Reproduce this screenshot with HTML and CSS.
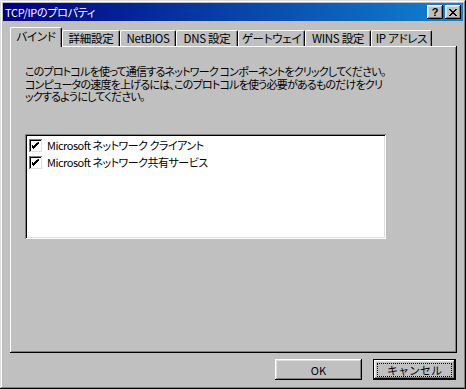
FILE: index.html
```html
<!DOCTYPE html>
<html lang="ja">
<head>
  <meta charset="UTF-8" />
  <title>TCP/IPのプロパティ</title>
  <link rel="stylesheet" href="styles.css">
</head>
<body>

  <div class="window">
    <div class="titlebar">
      <span class="title">TCP/IPのプロパティ</span>
      <div class="title-buttons">
        <div class="tbtn help">?</div>
        <div class="tbtn close">
          <svg width="8" height="7" viewBox="0 0 8 7"><path d="M0 0h2v1h1v1h2v-1h1v-1h2v1h-1v1h-1v1h-1v1h1v1h1v1h1v1h-2v-1h-1v-1h-2v1h-1v1h-2v-1h1v-1h1v-1h1v-1h-1v-1h-1v-1h-1z" fill="#000"/></svg>
        </div>
      </div>
    </div>

    <div class="content">
      <div class="tabs">
        <div class="tab active" style="width:52px">バインド</div>
        <div class="tab" style="width:58px">詳細設定</div>
        <div class="tab" style="width:56px">NetBIOS</div>
        <div class="tab" style="width:62px">DNS 設定</div>
        <div class="tab" style="width:67px">ゲートウェイ</div>
        <div class="tab" style="width:66px">WINS 設定</div>
        <div class="tab" style="width:61px">IP アドレス</div>
      </div>

      <div class="panel">
        <div class="desc">
          <div class="line">このプロトコルを使って通信するネットワーク コンポーネントをクリックしてください。</div>
          <div class="line">コンピュータの速度を上げるには、このプロトコルを使う必要があるものだけをクリ</div>
          <div class="line">ックするようにしてください。</div>
        </div>

        <div class="listbox">
          <div class="item"><span class="check"><svg width="7" height="7" viewBox="0 0 7 7"><path d="M6 0h1v2h-1v1h-1v1h-1v1h-1v1h-1v1h-1v-1h-1v-1h-1v-3h1v1h1v1h1v-1h1v-1h1v-1h1z" fill="#000"/></svg></span>Microsoft ネットワーク クライアント</div>
          <div class="item"><span class="check"><svg width="7" height="7" viewBox="0 0 7 7"><path d="M6 0h1v2h-1v1h-1v1h-1v1h-1v1h-1v1h-1v-1h-1v-1h-1v-3h1v1h1v1h1v-1h1v-1h1v-1h1z" fill="#000"/></svg></span>Microsoft ネットワーク共有サービス</div>
        </div>
      </div>

      <div class="actions">
        <div class="btn ok">OK</div>
        <div class="btn default"><span class="focus">キャンセル</span></div>
      </div>
    </div>
  </div>

</body>
</html>
```

FILE: styles.css
```css
body {
  margin: 0;
  background: #c0c0c0;
  font-family: "Noto Sans CJK JP", "Liberation Sans", sans-serif;
  font-size: 11px;
  color: #000;
}
.window {
  width: 466px;
  height: 389px;
  box-sizing: border-box;
  padding: 3px;
  background: #c0c0c0;
  box-shadow: inset -1px -1px #000, inset 1px 1px #dfdfdf, inset -2px -2px #808080, inset 2px 2px #fff;
}
.titlebar {
  height: 18px;
  display: flex;
  align-items: center;
  justify-content: space-between;
  padding: 0 2px 0 2px;
  background: linear-gradient(to right, #000080, #1084d0);
  color: #fff;
}
.title {
  font-size: 11px;
  line-height: 18px;
  letter-spacing: -0.3px;
  font-feature-settings: "palt";
}
.title-buttons {
  display: flex;
  gap: 2px;
}
.tbtn {
  width: 16px;
  height: 14px;
  box-sizing: border-box;
  background: #c0c0c0;
  color: #000;
  display: flex;
  align-items: center;
  justify-content: center;
  box-shadow: inset -1px -1px #000, inset 1px 1px #fff, inset -2px -2px #808080, inset 2px 2px #dfdfdf;
}
.help {
  font-family: "Liberation Sans", sans-serif;
  font-weight: bold;
  font-size: 11px;
  line-height: 14px;
}
.content {
  padding: 6px 6px 0 7px;
}
.tabs {
  display: flex;
  align-items: flex-end;
  height: 19px;
  position: relative;
  z-index: 1;
}
.tab {
  height: 16px;
  box-sizing: border-box;
  border-top: 1px solid #fff;
  border-left: 1px solid #fff;
  border-right: 1px solid #000;
  border-radius: 2px 2px 0 0;
  box-shadow: inset -1px 0 #808080;
  text-align: center;
  line-height: 15px;
  font-size: 11.5px;
  letter-spacing: -0.3px;
  font-feature-settings: "palt";
  white-space: nowrap;
}
.tab.active {
  height: 20px;
  margin-bottom: -1px;
  background: #c0c0c0;
  line-height: 17px;
}
.panel {
  height: 307px;
  box-sizing: border-box;
  padding: 19px 15px 0 15px;
  box-shadow: inset -1px -1px #000, inset 1px 1px #fff, inset -2px -2px #808080;
}
.desc {
  font-feature-settings: "palt";
  letter-spacing: -0.8px;
  white-space: nowrap;
}
.line {
  height: 12.5px;
  line-height: 12.5px;
}
.listbox {
  margin-top: 31px;
  width: 361px;
  height: 105px;
  box-sizing: border-box;
  padding: 3px 2px;
  background: #fff;
  box-shadow: inset 1px 1px #808080, inset -1px -1px #fff, inset 2px 2px #000, inset -2px -2px #dfdfdf;
}
.item {
  height: 17px;
  display: flex;
  align-items: center;
  letter-spacing: -0.5px;
  font-feature-settings: "palt";
}
.check {
  width: 13px;
  height: 13px;
  box-sizing: border-box;
  margin: 0 5px 0 2px;
  background: #fff;
  display: flex;
  align-items: center;
  justify-content: center;
  box-shadow: inset 1px 1px #808080, inset -1px -1px #dfdfdf, inset 2px 2px #000;
}
.actions {
  display: flex;
  justify-content: flex-end;
  gap: 11px;
  padding: 6px 1px 0 0;
}
.btn {
  height: 21px;
  box-sizing: border-box;
  display: flex;
  align-items: center;
  justify-content: center;
  box-shadow: inset -1px -1px #000, inset 1px 1px #fff, inset -2px -2px #808080, inset 2px 2px #dfdfdf;
}
.ok {
  width: 87px;
}
.default {
  width: 83px;
  border: 1px solid #000;
  height: 21px;
}
.focus {
  border: 1px dotted #000;
  width: 75px;
  height: 14px;
  box-sizing: border-box;
  text-align: center;
  line-height: 12px;
}
```
